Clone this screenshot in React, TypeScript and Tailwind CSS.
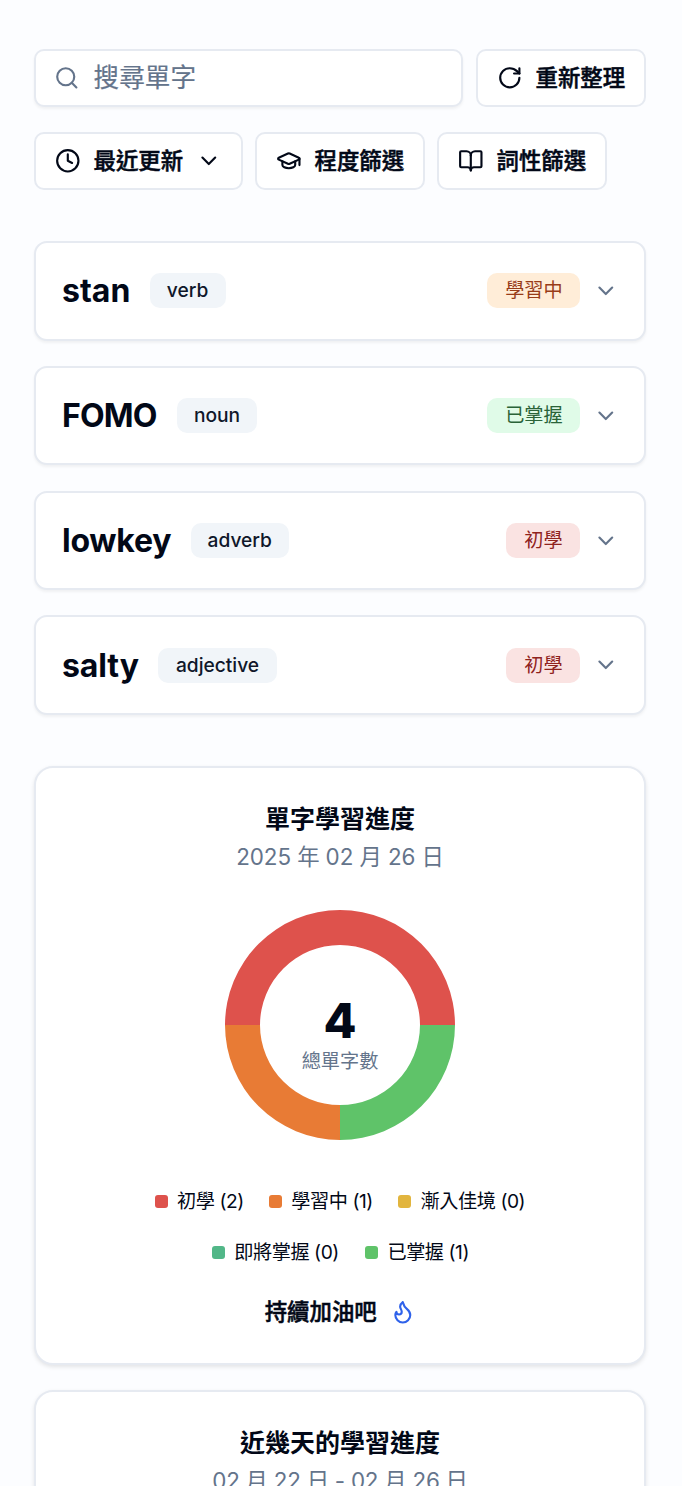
import { BookOpen, ChevronDown, Clock, Flame, GraduationCap, RotateCw, Search } from 'lucide-react';

const words = [
  { word: 'stan', wordStyle: 'w-[68.5px] tracking-[0px]', pos: 'verb', posStyle: 'w-[76px]', level: '學習中', levelStyle: 'w-[93px] bg-[#ffedd8] text-[#983c18]' },
  { word: 'FOMO', wordStyle: 'w-[96px] tracking-[-0.8px]', pos: 'noun', posStyle: 'w-[80px]', level: '已掌握', levelStyle: 'w-[93px] bg-[#e0fbe8] text-[#2a6338]' },
  { word: 'lowkey', wordStyle: 'w-[109.5px] tracking-[-0.25px]', pos: 'adverb', posStyle: 'w-[98.5px]', level: '初學', levelStyle: 'w-[74px] bg-[#fae3e2] text-[#8f221d]' },
  { word: 'salty', wordStyle: 'w-[77px] tracking-[-0.1px]', pos: 'adjective', posStyle: 'w-[119px]', level: '初學', levelStyle: 'w-[74px] bg-[#fae3e2] text-[#8f221d]' },
];

const legend = [
  [
    { label: '初學 (2)', color: 'bg-[#de524c]', width: 'w-[66px]' },
    { label: '學習中 (1)', color: 'bg-[#e87b35]', width: 'w-[81px]' },
    { label: '漸入佳境 (0)', color: 'bg-[#e2b53e]', width: 'w-[105px]' },
  ],
  [
    { label: '即將掌握 (0)', color: 'bg-[#52b788]', width: 'w-[105px]' },
    { label: '已掌握 (1)', color: 'bg-[#5fc369]', width: 'w-[81px]' },
  ],
];

const button = 'flex h-[58px] shrink-0 items-center rounded-[10px] border-2 border-[#e6eaf1] bg-white pl-[19px] text-[22.4px] font-medium whitespace-nowrap';
const mediumText = '[-webkit-text-stroke:0.5px_currentColor]';

function Donut() {
  return (
    <div className="relative mt-[35px] size-[230px]">
      <svg viewBox="0 0 230 230" className="size-full">
        <path d="M0 115A115 115 0 0 1 230 115H195A80 80 0 0 0 35 115Z" fill="#de524c" />
        <path d="M0 115A115 115 0 0 0 115 230V195A80 80 0 0 1 35 115Z" fill="#e87b35" />
        <path d="M230 115A115 115 0 0 1 115 230V195A80 80 0 0 0 195 115Z" fill="#5fc369" />
      </svg>
      <div className="absolute inset-0 flex flex-col items-center pt-[86px]">
        <div className="text-[48px] leading-[50px] font-extrabold">4</div>
        <div className="mt-px text-[19.2px] leading-[28px] text-[#64748b]">總單字數</div>
      </div>
    </div>
  );
}

export default function App() {
  return (
    <div className="h-[1486px] overflow-hidden bg-[#fcfdff] px-[34px] pt-[49px] font-['Inter','Noto_Sans_CJK_TC',sans-serif] text-[#020817]">
      <div className="flex w-[612px] gap-[13px]">
        <div className="flex h-[58px] w-[429px] items-center rounded-[10px] border-2 border-[#e6eaf1] bg-white pl-[17.5px] text-[#64748b] shadow-[0_2px_3px_rgba(0,0,0,0.05)]">
          <Search size={25.6} strokeWidth={2} />
          <span className="ml-[14.5px] text-[25.6px] leading-[36px] [-webkit-text-stroke:0.2px_currentColor]">搜尋單字</span>
        </div>
        <button className={`${button} w-[170px]`}>
          <RotateCw size={25.6} strokeWidth={2} />
          <span className={`ml-[13px] ${mediumText}`}>重新整理</span>
        </button>
      </div>

      <div className="mt-[25px] flex gap-[12px]">
        <button className={`${button} w-[209px]`}>
          <Clock size={25.6} strokeWidth={2} />
          <span className={`ml-[13px] ${mediumText}`}>最近更新</span>
          <ChevronDown size={25.6} strokeWidth={2} className="ml-[13px]" />
        </button>
        <button className={`${button} w-[170px]`}>
          <GraduationCap size={25.6} strokeWidth={2} />
          <span className={`ml-[13px] ${mediumText}`}>程度篩選</span>
        </button>
        <button className={`${button} w-[170px]`}>
          <BookOpen size={25.6} strokeWidth={2} />
          <span className={`ml-[13px] ${mediumText}`}>詞性篩選</span>
        </button>
      </div>

      <div className="mt-[51px] flex w-[612px] flex-col gap-[25.3px]">
        {words.map((w) => (
          <div key={w.word} className="flex h-[99.5px] items-center rounded-[13px] border-2 border-[#e6eaf1] bg-white pr-[25px] pl-[26px] shadow-[0_2px_3px_rgba(0,0,0,0.05)]">
            <span className={`pt-px text-[32px] leading-[40px] font-bold whitespace-nowrap ${w.wordStyle}`}>{w.word}</span>
            <span className={`ml-[19px] flex h-[35px] items-center justify-center rounded-[10px] bg-[#f1f5f9] text-[19.2px] font-medium text-[#0f172a] ${w.posStyle}`}>{w.pos}</span>
            <span className={`ml-auto flex h-[35px] items-center justify-center rounded-[10px] pb-px text-[19.2px] leading-[28px] ${w.levelStyle}`}>{w.level}</span>
            <ChevronDown size={25.6} strokeWidth={2} className="ml-[13px] text-[#64748b]" />
          </div>
        ))}
      </div>

      <div className="mt-[51px] flex h-[599px] w-[612px] flex-col items-center rounded-[19px] border-2 border-[#e6eaf1] bg-white pt-[32px] shadow-[0_2px_4px_rgba(0,0,0,0.1)]">
        <h2 className="text-[25px] leading-[38px] font-semibold">單字學習進度</h2>
        <p className="mt-px text-[22.4px] leading-[36px] tracking-[-0.1px] whitespace-nowrap text-[#64748b]">2025 年 02 月 26 日</p>
        <Donut />
        <div className="mt-[43.5px] flex flex-col items-center gap-[15px]">
          {legend.map((row, i) => (
            <div key={i} className="flex h-[36px] items-center gap-[25.6px]">
              {row.map((item) => (
                <div key={item.label} className="flex items-center gap-[9.6px]">
                  <span className={`size-[13px] rounded-[3px] ${item.color}`} />
                  <span className={`text-[19.2px] leading-[28px] tracking-[-0.45px] whitespace-nowrap ${item.width}`}>{item.label}</span>
                </div>
              ))}
            </div>
          ))}
        </div>
        <div className="mt-[25.5px] flex items-center gap-[13px] text-[22.4px] leading-[32px] font-medium">
          <span className={mediumText}>持續加油吧</span>
          <Flame size={25.6} strokeWidth={2} className="text-[#2f62ea]" />
        </div>
      </div>

      <div className="mt-[25px] flex h-[599px] w-[612px] flex-col items-center rounded-[19px] border-2 border-[#e6eaf1] bg-white pt-[32px] shadow-[0_2px_4px_rgba(0,0,0,0.1)]">
        <h2 className="text-[25px] leading-[38px] font-semibold">近幾天的學習進度</h2>
        <p className="mt-px text-[22.4px] leading-[36px] tracking-[-0.25px] whitespace-nowrap text-[#64748b]">02 月 22 日 - 02 月 26 日</p>
      </div>
    </div>
  );
}
